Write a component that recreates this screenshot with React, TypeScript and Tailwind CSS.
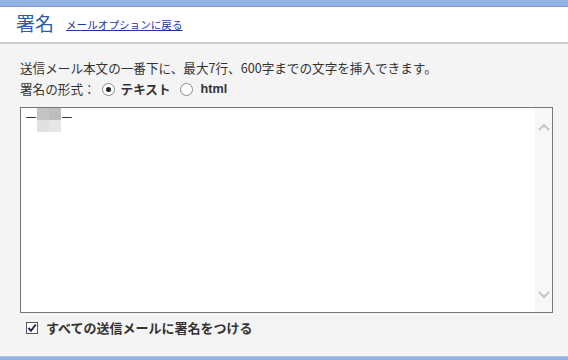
import React from "react";

const font = { fontFamily: '"Noto Sans CJK JP", "Noto Sans", sans-serif' };

function Chevron({ up }: { up?: boolean }) {
  return (
    <svg width="12" height="8" viewBox="0 0 12 8" className="block">
      <path
        d={up ? "M1 7 L6 2 L11 7" : "M1 1 L6 6 L11 1"}
        fill="none"
        stroke="#c6c6c6"
        strokeWidth="2.2"
      />
    </svg>
  );
}

function Radio({ checked }: { checked?: boolean }) {
  return (
    <span className="flex h-[13px] w-[13px] items-center justify-center rounded-full border border-[#8a8a8a] bg-white">
      {checked && <span className="h-[5px] w-[5px] rounded-full bg-[#222]" />}
    </span>
  );
}

export default function App() {
  return (
    <div className="flex h-[360px] w-[568px] flex-col bg-[#f4f4f4] text-[#333]" style={font}>
      {/* top bar */}
      <div className="h-[7px] border-b border-[#7f9ccb] bg-[#94b2df]" />
      {/* header */}
      <div className="flex h-[37px] items-end gap-[12px] border-b-2 border-[#cdcdcd] bg-white pb-[7px] pl-4">
        <h1 className="text-[19px] leading-[24px] text-[#2b5ca6]">署名</h1>
        <a href="#" className="mb-[3px] text-[10.6px] leading-[14px] text-[#1a3aa0] underline">
          メールオプションに戻る
        </a>
      </div>

      {/* body */}
      <div className="flex flex-1 flex-col px-5 pt-[14px]">
        <p className="text-[12.6px] leading-[20px]">
          送信メール本文の一番下に、最大7行、600字までの文字を挿入できます。
        </p>
        <div className="flex h-[22px] items-center text-[12.6px]">
          <span>署名の形式：</span>
          <span className="ml-[6px]"><Radio checked /></span>
          <span className="ml-[6px] font-bold">テキスト</span>
          <span className="ml-[9px]"><Radio /></span>
          <span className="ml-[8px] font-bold" style={{ fontFamily: '"Liberation Sans", sans-serif' }}>html</span>
        </div>

        {/* textarea */}
        <div className="mt-[7px] flex h-[206px] w-[533px] border border-[#777] bg-white">
          <div className="flex flex-1 items-start pl-[4px]">
            <span className="mt-[3px] text-[12px] leading-[14px]">ー</span>
            <span className="grid grid-cols-2">
              <span className="h-[12px] w-[12px] bg-[#c4c4c4]" />
              <span className="h-[12px] w-[12px] bg-[#bdbdbd]" />
              <span className="h-[12px] w-[12px] bg-[#e0e0e0]" />
              <span className="h-[12px] w-[12px] bg-[#e6e6e6]" />
            </span>
            <span className="mt-[3px] text-[12px] leading-[14px]">ー</span>
          </div>
          <div className="flex w-[17px] flex-col items-center justify-between bg-[#f7f7f7] pt-[15px] pb-[13px]">
            <Chevron up />
            <Chevron />
          </div>
        </div>

        <label className="mt-[5px] flex items-center gap-[8px] pl-[6px] text-[13px] font-bold">
          <span className="flex h-[12px] w-[12px] items-center justify-center border border-[#555] bg-white">
            <svg width="10" height="10" viewBox="0 0 10 10">
              <path d="M1.5 5 L4 7.8 L8.8 1.5" fill="none" stroke="#1b2a4a" strokeWidth="2" />
            </svg>
          </span>
          すべての送信メールに署名をつける
        </label>
      </div>

      {/* bottom bar */}
      <div className="h-[4px] border-t border-[#b0c4e4] bg-[#94b2df]" />
    </div>
  );
}
